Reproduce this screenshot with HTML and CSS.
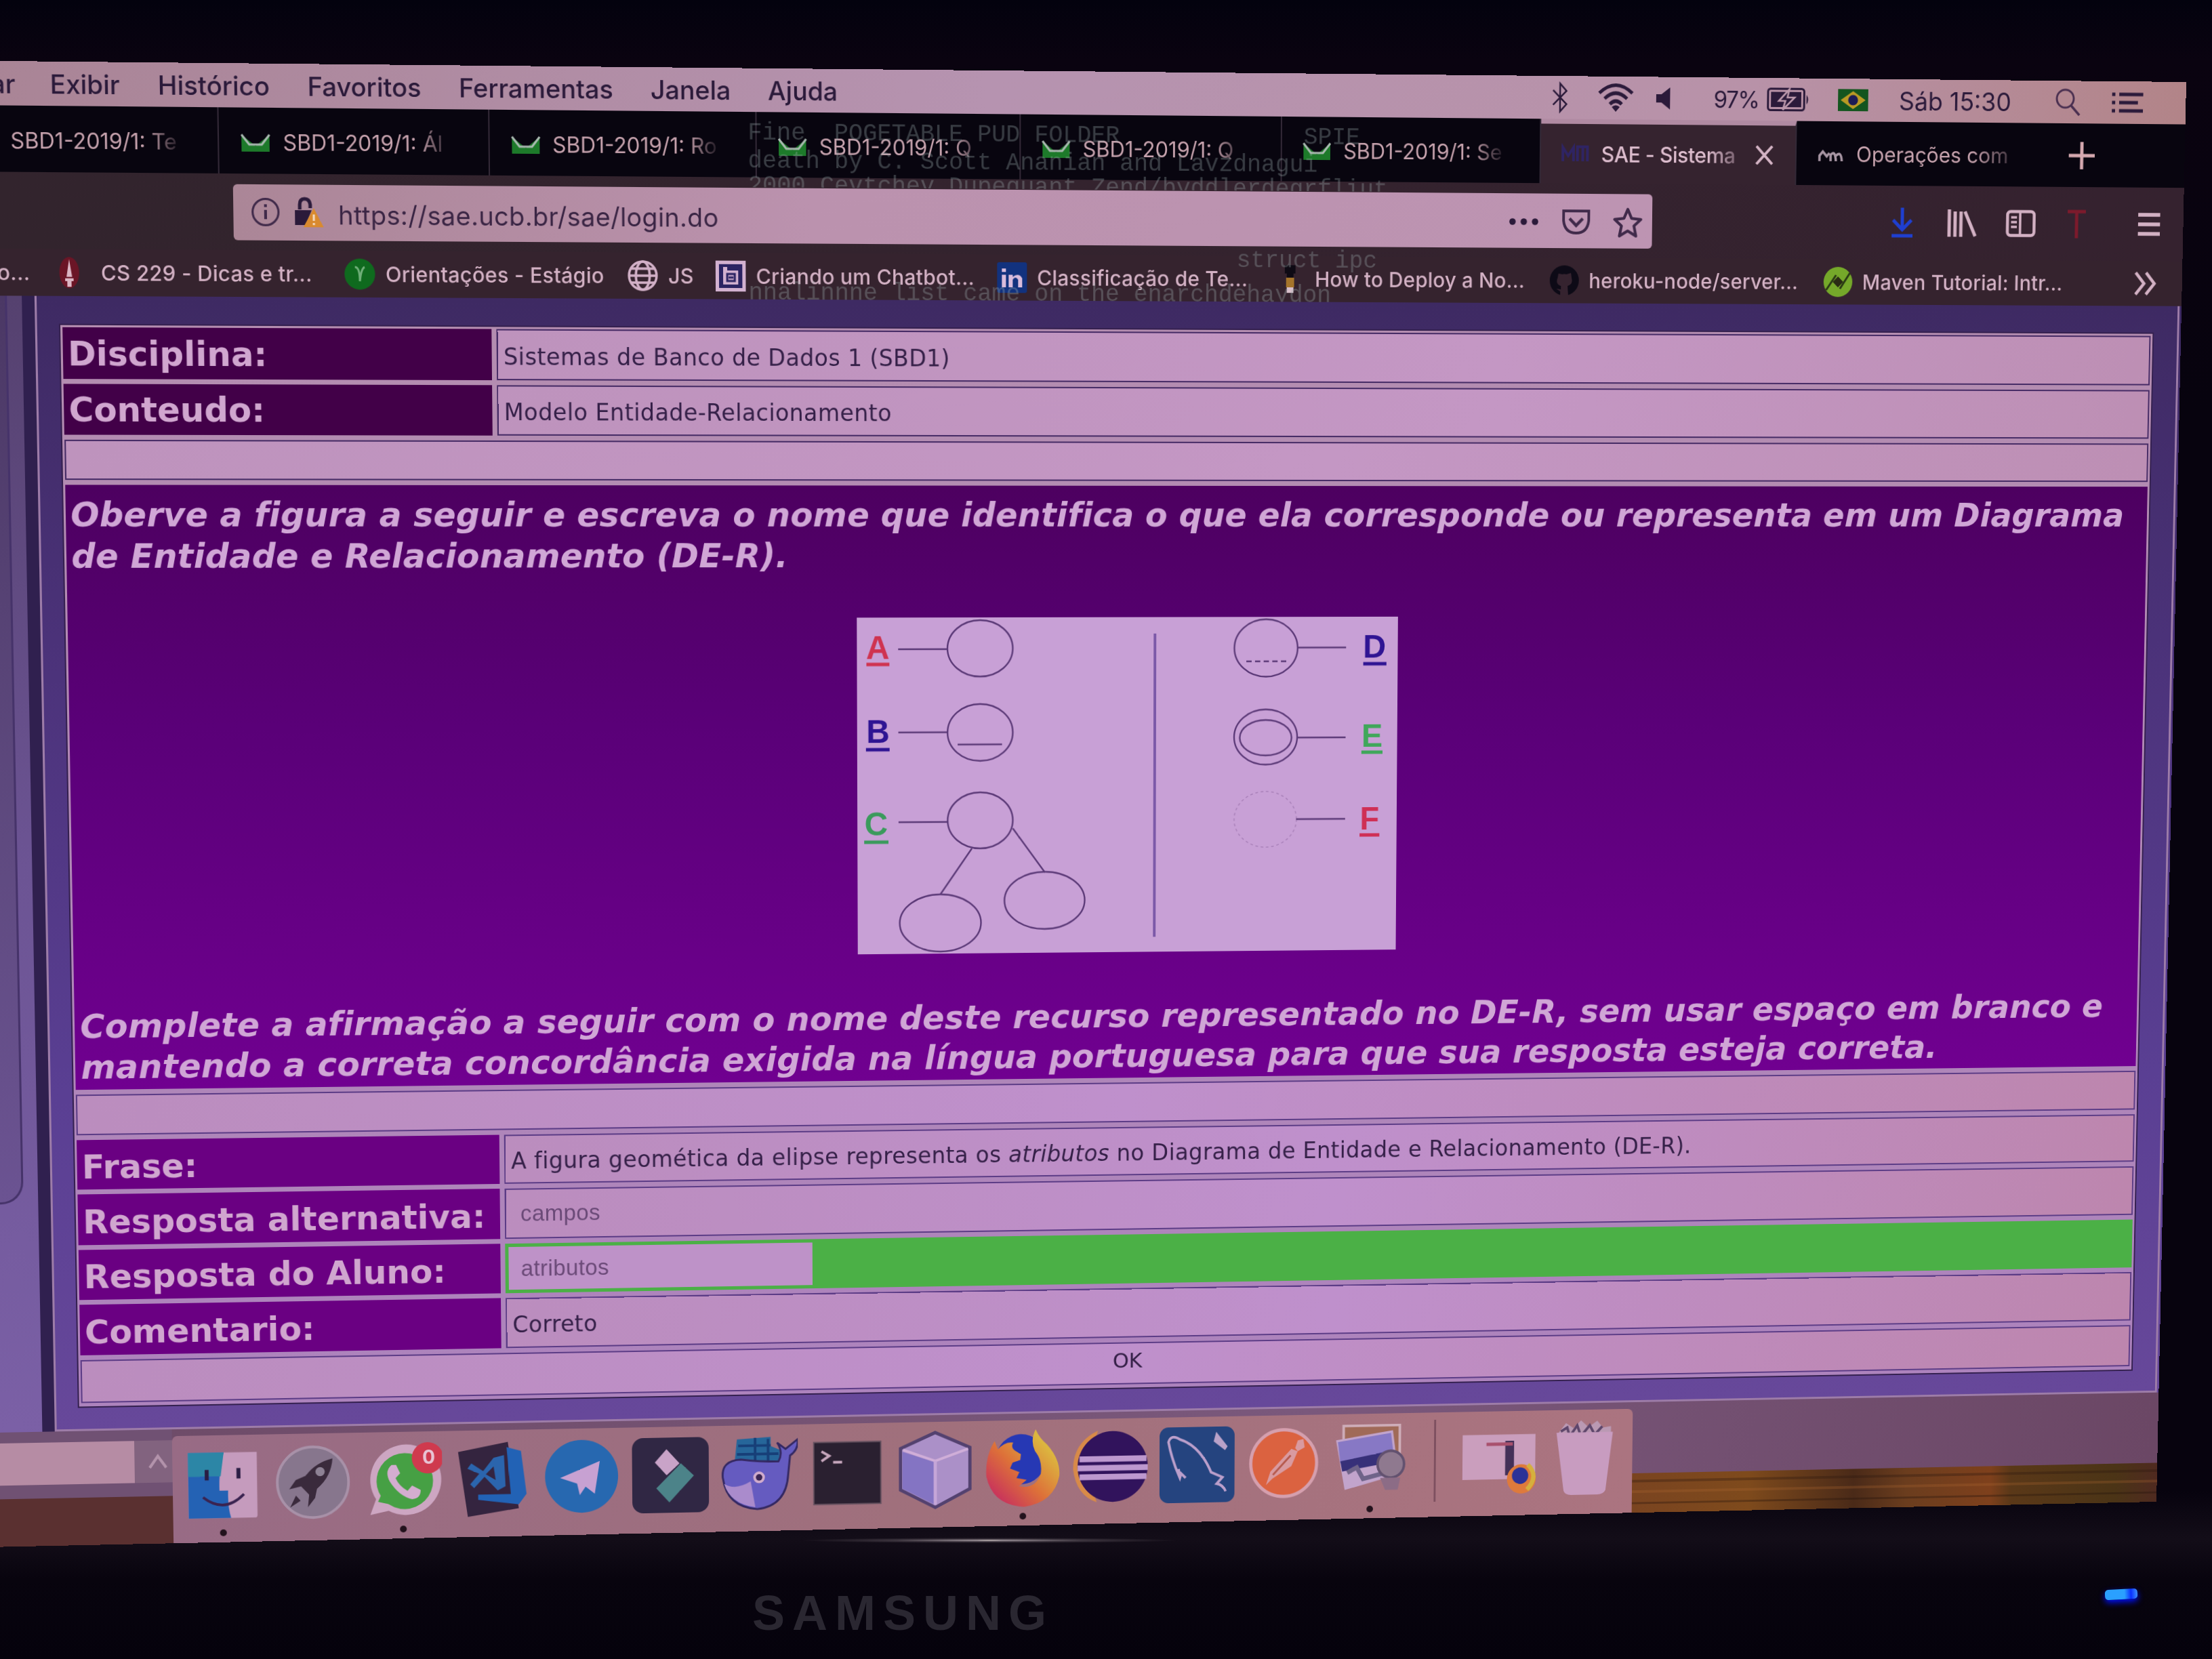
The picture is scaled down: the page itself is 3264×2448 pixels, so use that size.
FILE: index.html
```html
<!DOCTYPE html>
<html lang="pt-BR">
<head>
<meta charset="utf-8">
<title>SAE - Sistema</title>
<link rel="stylesheet" href="styles.css">
</head>
<body>
<div class="room">
<main class="screen">
  <header class="menubar">
    <nav class="menus"><span class="cut">ar</span><span>Exibir</span><span>Histórico</span><span>Favoritos</span><span>Ferramentas</span><span>Janela</span><span>Ajuda</span></nav>
    <div class="status">
      <svg class="s-bt" viewBox="0 0 30 48"><path d="M4 13 25 34 15 45V3L25 14 4 35" fill="none" stroke="#2b1a3a" stroke-width="2.6"/></svg>
      <svg class="s-wifi" viewBox="0 0 56 44"><g fill="none" stroke="#2b1a3a" stroke-width="5"><path d="M3 15Q28-8 53 15"/><path d="M11 23Q28 7 45 23"/><path d="M19 31Q28 22 37 31"/></g><path d="M22 35Q28 30 34 35L28 42Z" fill="#2b1a3a"/></svg>
      <svg class="s-vol" viewBox="0 0 24 34"><path d="M1 11H9L22 1V33L9 23H1Z" fill="#2b1a3a"/></svg>
      <span class="pct">97%</span>
      <svg class="s-bat" viewBox="0 0 66 34"><rect x="1.5" y="1.5" width="55" height="31" rx="4" fill="none" stroke="#2b1a3a" stroke-width="3"/><rect x="6" y="6" width="46" height="22" fill="#2b1a3a"/><path d="M60 10Q65 17 60 24Z" fill="#2b1a3a"/><path d="M34 2 18 19H28L24 32 42 14H31Z" fill="#2b1a3a" stroke="#bb98ab" stroke-width="2.6"/></svg>
      <svg class="s-flag" viewBox="0 0 46 32"><path d="M0 0H46V32H0Z" fill="#14551f"/><path d="M23 3 42 16 23 29 4 16Z" fill="#b99a24"/><circle cx="23" cy="16" r="7.5" fill="#1c1c55"/></svg>
      <span class="clock">Sáb 15:30</span>
      <svg class="s-find" viewBox="0 0 42 42"><circle cx="17" cy="16" r="13" fill="none" stroke="#4a2f50" stroke-width="3"/><path d="m26 26 13 14" stroke="#4a2f50" stroke-width="3.5"/></svg>
      <svg class="s-list" viewBox="0 0 50 32"><path d="M12 4H49M12 16H41M12 28H49" stroke="#2b1a3a" stroke-width="5"/><path d="M1 4H6M1 16H6M1 28H6" stroke="#2b1a3a" stroke-width="5"/></svg>
    </div>
  </header>

  <div class="tabs">
    <div class="tab"><i class="fav"></i><span>SBD1-2019/1: Te</span></div>
    <div class="tab"><svg class="fav" viewBox="0 0 44 30"><path d="M2 4 22 20 42 4V28H2Z" fill="#1d7a2a"/><path d="M2 4 13 18H31L42 4" fill="none" stroke="#a9b8b0" stroke-width="3"/></svg><span>SBD1-2019/1: Ál</span></div>
    <div class="tab"><svg class="fav" viewBox="0 0 44 30"><path d="M2 4 22 20 42 4V28H2Z" fill="#1d7a2a"/><path d="M2 4 13 18H31L42 4" fill="none" stroke="#a9b8b0" stroke-width="3"/></svg><span>SBD1-2019/1: Ro</span></div>
    <div class="tab"><svg class="fav" viewBox="0 0 44 30"><path d="M2 4 22 20 42 4V28H2Z" fill="#1d7a2a"/><path d="M2 4 13 18H31L42 4" fill="none" stroke="#a9b8b0" stroke-width="3"/></svg><span>SBD1-2019/1: Q</span></div>
    <div class="tab"><svg class="fav" viewBox="0 0 44 30"><path d="M2 4 22 20 42 4V28H2Z" fill="#1d7a2a"/><path d="M2 4 13 18H31L42 4" fill="none" stroke="#a9b8b0" stroke-width="3"/></svg><span>SBD1-2019/1: Q</span></div>
    <div class="tab"><svg class="fav" viewBox="0 0 44 30"><path d="M2 4 22 20 42 4V28H2Z" fill="#1d7a2a"/><path d="M2 4 13 18H31L42 4" fill="none" stroke="#a9b8b0" stroke-width="3"/></svg><span>SBD1-2019/1: Se</span></div>
    <div class="tab active"><svg class="fav" viewBox="0 0 44 30"><path d="M3 26V6L11 18 19 6V26M25 26V5H40V26M33 5V26" fill="none" stroke="#2f2463" stroke-width="4"/></svg><span class="wide">SAE - Sistema</span><svg class="close" viewBox="0 0 28 28"><path d="M2 1 26 27M26 1 2 27" stroke="#d3b3c4" stroke-width="4"/></svg></div>
    <div class="tab last"><svg class="fav" viewBox="0 0 44 30"><path d="M5 25V17L10 11 16 18 20 13M22 25V16Q29 8 30 25M30 17Q38 9 39 25" fill="none" stroke="#a896a4" stroke-width="3.6"/></svg><span class="wide">Operações com</span></div>
    <svg class="plus" viewBox="0 0 40 40"><path d="M20 0V40M0 20H40" stroke="#d6a9b0" stroke-width="5"/></svg>
  </div>

  <div class="toolbar">
    <div class="url">
      <svg class="u-info" viewBox="0 0 42 42"><circle cx="21" cy="21" r="18.5" fill="none" stroke="#402a4a" stroke-width="3"/><path d="M21 18V31M21 10V14" stroke="#402a4a" stroke-width="4"/></svg>
      <svg class="u-lock" viewBox="0 0 46 44"><path d="M10 18V11Q10 3 17 3T25 11V16" fill="none" stroke="#2b1a3a" stroke-width="5"/><path d="M3 19H27L18 40H3Z" fill="#2b1a3a"/><path d="M30 16 44 43H15Z" fill="#d98a2e"/><path d="M30 25V34M30 37V40" stroke="#f3d9c0" stroke-width="3"/></svg>
      <span class="addr">https://sae.ucb.br/sae/login.do</span>
      <svg class="u-dots" viewBox="0 0 44 10"><g fill="#2b1a3a"><circle cx="5" cy="5" r="4.8"/><circle cx="22" cy="5" r="4.8"/><circle cx="39" cy="5" r="4.8"/></g></svg>
      <svg class="u-pocket" viewBox="0 0 44 38"><path d="M3 3H41V17Q39 35 22 35T3 17Z" fill="none" stroke="#402a4a" stroke-width="4"/><path d="m12 14 10 10 10-10" fill="none" stroke="#402a4a" stroke-width="4.5"/></svg>
      <svg class="u-star" viewBox="0 0 44 44"><path d="m22 4 5.500 12.500 13.500 1.500-10 9 3 14-12-7-12 7 3-14-10-9 13.500-1.500Z" fill="none" stroke="#402a4a" stroke-width="4" stroke-linejoin="round"/></svg>
    </div>
    <div class="tools">
      <svg class="t-down" viewBox="0 0 36 44"><path d="M18 0V30M4 18 18 32 32 18M2 41H34" fill="none" stroke="#1f3fd0" stroke-width="5"/></svg>
      <svg class="t-lib" viewBox="0 0 46 40"><path d="M3 0V40M12 3V40M21 3V40M27 3 43 39" stroke="#d3b1c4" stroke-width="5"/></svg>
      <svg class="t-side" viewBox="0 0 46 40"><rect x="2.500" y="2.500" width="41" height="35" rx="5" fill="none" stroke="#d3b1c4" stroke-width="4.500"/><path d="M22 3V37M8 11H17M8 18H17M8 25H17" stroke="#d3b1c4" stroke-width="3.600"/></svg>
      <svg class="t-t" viewBox="0 0 30 42"><path d="M1 3H29M15 3V42" stroke="#7c1a2c" stroke-width="5"/></svg>
      <svg class="t-menu" viewBox="0 0 34 36"><path d="M0 4H34M0 18H34M0 32H34" stroke="#d3b1c4" stroke-width="5.500"/></svg>
    </div>
  </div>

  <div class="bookmarks">
    <div class="bm tail">o...</div>
    <div class="bm"><svg viewBox="0 0 44 44"><ellipse cx="14" cy="22" rx="14" ry="22" fill="#6b1526"/><path d="M14 3 18 28H10ZM8 30H20V34H17V42H11V34H8Z" fill="#dcb6c4"/></svg>CS 229 - Dicas e tr...</div>
    <div class="bm"><svg viewBox="0 0 44 44"><circle cx="22" cy="22" r="22" fill="#0f6a1e"/><path d="M15 12Q22 12 22 32Q24 14 29 12" fill="none" stroke="#6fae78" stroke-width="3"/></svg>Orientações - Estágio</div>
    <div class="bm"><svg viewBox="0 0 44 44"><g fill="none" stroke="#d3b1c8" stroke-width="3.500"><circle cx="22" cy="22" r="20"/><ellipse cx="22" cy="22" rx="10" ry="20"/><path d="M2 22H42M5 12H39M5 32H39"/></g></svg>JS</div>
    <div class="bm"><svg viewBox="0 0 44 44"><path d="M0 0H44V44H0Z" fill="#d3b1d0"/><path d="M5 5H39V39H5Z" fill="#2b2362"/><path d="M11 9H17V14H33V34H11Z" fill="#d3b1d0"/><path d="M17 19H28V29H17Z" fill="none" stroke="#2b2362" stroke-width="3"/><path d="M19 24H26" stroke="#2b2362" stroke-width="3"/></svg>Criando um Chatbot...</div>
    <div class="bm"><svg viewBox="0 0 44 44"><rect width="44" height="44" rx="3" fill="#12327e"/><path d="M7 18H13V36H7ZM7 9H13V14H7ZM17 18H23V21Q32 14 37 23V36H31V25Q27 19 23 25V36H17Z" fill="#d9bcdc"/></svg>Classificação de Te...</div>
    <div class="bm"><svg viewBox="0 0 44 44"><path d="M14 2H30V14H27V20H17V14H14Z" fill="#0e0a14"/><path d="M16 20H28V34H16Z" fill="#a5742b"/><path d="M17 34H27V42H17Z" fill="#d9c0cc"/></svg>How to Deploy a No...</div>
    <div class="bm"><svg viewBox="0 0 44 44"><circle cx="22" cy="22" r="22" fill="#0d0a16"/><path d="M13 12 19 13Q22 12 25 13L32 11 33 18Q36 27 27 30L28 44H16V38L10 34 17 35 17 30Q8 27 12 18Z" fill="#35232f"/></svg>heroku-node/server...</div>
    <div class="bm"><svg viewBox="0 0 44 44"><circle cx="22" cy="22" r="22" fill="#75a82a"/><path d="M22 14 30 22 22 30 14 22Z" fill="#2a2c14"/><path d="M4 34 19 12M25 32 40 9" stroke="#2a3a14" stroke-width="3"/></svg>Maven Tutorial: Intr...</div>
    <svg class="more" viewBox="0 0 36 36"><path d="m3 2 13 16L3 34M19 2l13 16-13 16" fill="none" stroke="#d3b1c4" stroke-width="4.500"/></svg>
  </div>

  <section class="page">
    <aside class="side"><div class="panel"></div></aside>
    <div class="frame">
      <div class="form">
        <div class="lab">Disciplina:</div><div class="val">Sistemas de Banco de Dados 1 (SBD1)</div>
        <div class="lab">Conteudo:</div><div class="val">Modelo Entidade-Relacionamento</div>
        <div class="val full"></div>
        <div class="question full">
          <p class="q1">Oberve a figura a seguir e escreva o nome que identifica o que ela corresponde ou representa em um Diagrama<br>de Entidade e Relacionamento (DE-R).</p>
          <svg class="diagram" viewBox="0 0 808 491">
            <rect width="808" height="491" fill="#c8a0d6"/>
            <g fill="none" stroke="#5c3a78" stroke-width="2.400">
              <ellipse cx="182.500" cy="45" rx="48.500" ry="41"/><path d="M61 46H134"/>
              <ellipse cx="182.500" cy="167.500" rx="48.500" ry="41.500"/><path d="M61 167H134M149 185H215"/>
              <ellipse cx="182.500" cy="296" rx="48.500" ry="41"/><path d="M61 298H134M170 337 123 404M231 308 279 373"/>
              <ellipse cx="123" cy="446" rx="60.500" ry="42"/><ellipse cx="278.500" cy="414" rx="60" ry="42"/>
              <ellipse cx="609.500" cy="45.500" rx="47.500" ry="42"/><path d="M657 45H730"/><path d="M580 65H643" stroke-dasharray="8 5"/>
              <ellipse cx="609.500" cy="176" rx="47.500" ry="40.500"/><ellipse cx="609.500" cy="177" rx="39" ry="26"/><path d="M657 177H730"/>
              <ellipse cx="609.500" cy="297" rx="47" ry="41" stroke="#aa82ba" stroke-width="1.600" stroke-dasharray="4 4"/><path d="M656 297H730"/>
            </g>
            <path d="M443 24V469" stroke="#7c59a8" stroke-width="4"/>
            <g class="letters" text-anchor="middle">
              <text x="31" y="60" fill="#cf3350">A</text><text x="31" y="182" fill="#2f1493">B</text><text x="28" y="317" fill="#3a9a5c">C</text>
              <text x="773" y="60" fill="#2f1493">D</text><text x="770" y="191" fill="#3fa75a">E</text><text x="767" y="313" fill="#cf2f55">F</text>
            </g>
            <g stroke-width="5"><path d="M14 68H48" stroke="#cf3350"/><path d="M13 192H48" stroke="#2f1493"/><path d="M10 327H46" stroke="#3a9a5c"/><path d="M756 69H791" stroke="#2f1493"/><path d="M754 199H786" stroke="#3fa75a"/><path d="M752 321H782" stroke="#cf2f55"/></g>
          </svg>
          <p class="q2">Complete a afirmação a seguir com o nome deste recurso representado no DE-R, sem usar espaço em branco e<br>mantendo a correta concordância exigida na língua portuguesa para que sua resposta esteja correta.</p>
        </div>
        <div class="val full"></div>
        <div class="lab">Frase:</div><div class="val">A figura geomética da elipse representa os&nbsp;<em>atributos</em>&nbsp;no Diagrama de Entidade e Relacionamento (DE-R).</div>
        <div class="lab">Resposta alternativa:</div><div class="val field">campos</div>
        <div class="lab">Resposta do Aluno:</div><div class="val right"><div class="answer">atributos</div></div>
        <div class="lab">Comentario:</div><div class="val">Correto</div>
        <div class="val full ok">OK</div>
      </div>
    </div>
  </section>

  <footer class="desk">
    <div class="strip"><div class="box"><svg viewBox="0 0 30 24"><path d="M3 21 15 4 27 21" fill="none" stroke="#b393ab" stroke-width="4"/></svg></div></div>
    <div class="dock">
      <div class="app run"><svg viewBox="0 0 120 120"><path d="M8 12H112V108Q112 112 108 112H8Z" fill="#c59bbd"/><path d="M8 12H62Q54 40 55 70H68Q67 95 72 112H8Z" fill="#2462b4"/><path d="M8 12H62L57 48H8Z" fill="#2c86a6"/><path d="M36 38V54M84 36V52" stroke="#2a1d44" stroke-width="6"/><path d="M30 80Q62 106 92 76" fill="none" stroke="#3a2350" stroke-width="4"/></svg></div>
      <div class="app"><svg viewBox="0 0 120 120"><circle cx="60" cy="60" r="54" fill="#87768d" stroke="#a891a8" stroke-width="4"/><path d="M90 24Q64 30 49 50L34 56 24 70 42 66 54 79 52 98 63 84 66 70Q88 52 90 24ZM34 80 25 98 41 88Z" fill="#3a2a3c"/><circle cx="71" cy="44" r="7" fill="#8e8295"/></svg></div>
      <div class="app run"><svg viewBox="0 0 120 120"><path d="M10 112 19 88A54 54 0 1 1 38 106Z" fill="#cda6c2"/><circle cx="63" cy="61" r="43" fill="#46a044"/><path d="M22 92 30 74 48 98Z" fill="#46a044"/><path d="M43 36Q32 45 40 61 54 84 74 89 87 88 87 75L74 68 67 76Q54 68 49 56L56 49 50 36Z" fill="#d4add0"/><circle cx="98" cy="26" r="24" fill="#cf3a4e"/></svg><b class="badge">0</b></div>
      <div class="app"><svg viewBox="0 0 120 120"><path d="M8 18 84 4 100 106 22 118Z" fill="#34243f"/><path d="M82 12 104 18 112 84 100 100 38 92V84L88 84Z" fill="#2262b5"/><path d="M62 28 78 24 80 72 68 78 48 57 32 74 26 68 40 52 22 44 28 36 46 48Z" fill="#2b65ad"/><path d="M62 41 50 53 65 62Z" fill="#34243f"/></svg></div>
      <div class="app"><svg viewBox="0 0 120 120"><circle cx="60" cy="59" r="56" fill="#2768b0"/><path d="M27 61 88 36 80 86 66 75 57 88 53 70Z" fill="#c7a1d2"/></svg></div>
      <div class="app"><svg viewBox="0 0 120 120"><rect x="1" y="2" width="118" height="116" rx="17" fill="#302744"/><path d="M54 20 74 42 54 60 36 40Z" fill="#c9a3c8"/><path d="M76 42 96 61 58 102 38 80Z" fill="#4c8389"/></svg></div>
      <div class="app"><svg viewBox="0 0 120 120"><path d="M26 7 78 4V18L92 24V46H22Z" fill="#26669a"/><path d="M54 5V44M74 7V44M28 17H78M26 30H90" stroke="#173f78" stroke-width="4"/><path d="M90 42Q98 28 88 13L101 23 120 8Q121 25 108 33L105 62Q102 111 57 115 10 111 4 66 1 39 32 38 60 42 90 42Z" fill="#655bc0" stroke="#342862" stroke-width="3"/><path d="M6 75Q23 86 47 72L54 112Q15 106 6 75Z" fill="#aa8bcc"/><circle cx="60" cy="66" r="9" fill="#d1accc"/><circle cx="60" cy="66" r="5" fill="#3a2552"/></svg></div>
      <div class="app"><svg viewBox="0 0 120 120"><path d="M8 14H112V110H8Z" fill="#2a2030" stroke="#675260" stroke-width="2"/><path d="m20 28 12 7-12 8M38 45H52" fill="none" stroke="#c6a6bc" stroke-width="4"/></svg></div>
      <div class="app"><svg viewBox="0 0 120 120"><path d="M60 2 114 26V90L60 118 6 90V26Z" fill="#ab90c8" stroke="#53416f" stroke-width="5"/><path d="M9 31 60 48V114L9 88Z" fill="#8474c3"/><path d="M10 28 60 46 111 28" fill="none" stroke="#d0aed8" stroke-width="4"/><path d="M60 46V114" stroke="#c5a6d8" stroke-width="5"/></svg></div>
      <div class="app run"><svg viewBox="0 0 120 120"><defs><linearGradient id="fox" x1="1" y1="0" x2="0" y2="1"><stop offset=".2" stop-color="#dcb63f"/><stop offset=".55" stop-color="#dd7039"/><stop offset=".9" stop-color="#c62c60"/></linearGradient></defs><circle cx="57" cy="46" r="39" fill="#2638b4"/><path d="M80 0Q86 14 98 24 119 48 117 73 109 114 62 120 13 117 3 72 1 40 16 17L21 30Q32 18 45 20 40 28 50 34L57 38 56 47 44 51 40 60 55 66 50 75 66 78 54 88Q80 93 88 69 91 49 79 34 71 17 80 0Z" fill="url(#fox)"/></svg></div>
      <div class="app"><svg viewBox="0 0 120 120"><path d="M41 4Q2 22 2 63 7 104 39 115Q19 62 41 4Z" fill="#d88a48"/><circle cx="64" cy="60" r="55" fill="#31135c"/><path d="M12 48H117M9 62H119M12 76H117" stroke="#bd98cf" stroke-width="9"/></svg></div>
      <div class="app"><svg viewBox="0 0 120 120"><rect x="1" y="1" width="118" height="118" rx="14" fill="#25447f"/><path d="M42 80 35 73 33 80Q20 51 15 24 19 11 33 20 65 31 82 72L100 80 91 90Q101 92 105 102M33 80 31 66" fill="none" stroke="#bb9fcb" stroke-width="4"/><path d="M86 24 90 9 108 32 104 38Z" fill="#b9a2c9"/></svg></div>
      <div class="app"><svg viewBox="0 0 120 120"><circle cx="60" cy="60" r="52" fill="#db6240" stroke="#d59fae" stroke-width="5"/><path d="M32 94 39 73 72 38 82 42 72 65 42 84ZM78 37 82 25 91 23 93 36 82 42Z" fill="#d99aa0"/><path d="m43 78 28-30" stroke="#b65a4e" stroke-width="3"/></svg></div>
      <div class="app run"><svg viewBox="0 0 120 120"><path d="M18 4H107V70H18Z" fill="#a06a58" stroke="#ceadb9" stroke-width="4"/><path d="M6 26 96 12 105 81 20 104Z" fill="#c2a4cc"/><path d="M9 29 93 16 97 46 13 62Z" fill="#8778c5"/><path d="M13 59 97 43 99 61 16 75Z" fill="#373079"/><path d="m24 77 15-8 10 18 32-8" fill="none" stroke="#6f6389" stroke-width="7"/><circle cx="93" cy="65" r="21" fill="#8f798f" stroke="#62516f" stroke-width="4"/><path d="M76 86H108L104 105H84Z" fill="#8c6c86"/></svg></div>
      <div class="rule"></div>
      <div class="app"><svg viewBox="0 0 120 120"><path d="M2 22H118V92H2Z" fill="#ca9ebd"/><path d="M70 32H84V86H70Z" fill="#443058"/><path d="M40 37H82" stroke="#a8506d" stroke-width="5"/><circle cx="96" cy="92" r="23" fill="#de7a3c"/><circle cx="94" cy="87" r="13" fill="#2c3297"/><path d="M106 70Q125 88 105 109" fill="none" stroke="#d5b03d" stroke-width="7"/></svg></div>
      <div class="app"><svg viewBox="0 0 120 120"><path d="M16 24 30 6 42 14 54 2 66 13 80 3 89 14 102 12V27Z" fill="#ba99b3"/><path d="M22 19 32 13 36 27 48 10 54 27 68 10 76 25 88 12" fill="none" stroke="#5e466b" stroke-width="4"/><path d="M15 21H105L94 112Q91 119 81 119H39Q29 119 27 112Z" fill="#c89cc0"/></svg></div>
    </div>
    <div class="wood"></div>
  </footer>

  <div class="ghost g1">Fine  POGETABLE PUD FOLDER             SPIE</div>
  <div class="ghost g2">death by C. Scott Ananian and Lavzdnagui</div>
  <div class="ghost g3">2000 Cevtchev Dupequant Zend/byddlerdegrfliut</div>
  <div class="ghost g4">struct ipc</div>
  <div class="ghost g5">nnalinnne list came on the enarchdehaydon</div>
</main>
<div class="glint"></div>
<div class="brand">SAMSUNG</div>
<div class="led"></div>
</div>
</body>
</html>
```
FILE: styles.css
```css
* { box-sizing: border-box; }
html, body { margin: 0; }
body { background: #07030e; }
svg { display: block; flex: none; }
p { margin: 0; }

.room {
  position: relative;
  width: 3264px;
  height: 2448px;
  overflow: hidden;
  background: linear-gradient(#03020e 0, #0a0310 90px, #07030e 600px, #07030e 2200px, #130d18 2270px, #08040e 2330px, #05020c 2448px);
  font-family: Inter, "Liberation Sans", sans-serif;
}

/* The monitor stands at a slight angle */
.screen {
  position: relative;
  display: flex;
  flex-direction: column;
  width: 3286px;
  height: 2130px;
  overflow: hidden;
  background: #35232f;
  transform-origin: 0 0;
  transform: matrix3d(1.04707, 0.011382, 0, 0.0000145907, 0.0194855, 1.059371, 0, 0.0000129268, 0, 0, 1, 0, -60, 89.4, 0, 1);
}

/* menu bar */
.menubar {
  display: flex;
  justify-content: space-between;
  align-items: center;
  height: 62px;
  padding: 0 65px 0 43px;
  background: linear-gradient(90deg, #a98495, #b693b0 45%, #b892a8 80%, #b28488);
  color: #2b1a3a;
  font-size: 37px;
  font-weight: 500;
}
.menus { display: flex; gap: 54px; white-space: nowrap; }
.menus .cut { margin-right: -5px; }
.status { display: flex; align-items: center; white-space: nowrap; }
.s-bt { width: 30px; height: 46px; }
.s-wifi { width: 56px; height: 44px; margin-left: 41px; }
.s-vol { width: 24px; height: 34px; margin-left: 32px; }
.pct { margin-left: 64px; width: 73px; font-size: 34px; font-weight: 400; letter-spacing: -1.500px; }
.s-bat { width: 66px; height: 34px; margin-left: 8px; }
.s-flag { width: 46px; height: 32px; margin-left: 42px; }
.clock { margin-left: 47px; width: 183px; font-weight: 400; }
.s-find { width: 42px; height: 42px; margin-left: 55px; }
.s-list { width: 50px; height: 32px; margin-left: 46px; }

/* tabs */
.tabs {
  display: flex;
  align-items: stretch;
  height: 93px;
  padding-right: 139px;
  margin-left: -21px;
  background: #08050f;
}
.tab {
  display: flex;
  align-items: center;
  width: 387.300px;
  flex: none;
  padding: 4px 0 0 30px;
  border-right: 2px solid #332937;
  color: #c6a2ad;
  font-size: 31px;
}
.fav { width: 44px; height: 30px; margin-right: 17px; flex: none; }
.tab span {
  width: 245px;
  overflow: hidden;
  white-space: nowrap;
  -webkit-mask-image: linear-gradient(90deg, #000 80%, transparent);
  mask-image: linear-gradient(90deg, #000 80%, transparent);
}
.tab .wide { width: 215px; letter-spacing: -.5px; -webkit-mask-image: linear-gradient(90deg, #000 75%, #0004); mask-image: linear-gradient(90deg, #000 75%, #0004); }
.tab.active { padding-top: 0; background: #35232f; border-top: 7px solid #b08aa2; color: #dcbccd; font-weight: 500; }
.tab.last { padding-top: 2px; border-right: 0; }
.tab.last .wide { width: 240px; letter-spacing: 0; }
.close { width: 28px; height: 28px; margin-left: 18px; }
.plus { width: 40px; height: 40px; margin-left: 30px; align-self: center; }

/* toolbar */
.toolbar {
  display: flex;
  align-items: center;
  height: 108px;
  padding: 0 36px 0 385px;
  background: linear-gradient(90deg, #32242d, #35222f);
}
.url {
  display: flex;
  align-items: center;
  width: 2087px;
  height: 79px;
  padding: 0 14px 0 25px;
  border-radius: 6px;
  background: linear-gradient(90deg, #ab8697, #bb92ae 40%, #bd94b2);
}
.u-info { width: 42px; height: 42px; }
.u-lock { width: 46px; height: 44px; margin-left: 18px; }
.addr { margin: 7px auto 0 19px; color: #3a2544; font-size: 37px; letter-spacing: .4px; }
.u-dots { width: 44px; height: 10px; margin-top: 3px; }
.u-pocket { width: 44px; height: 38px; margin-left: 35px; margin-top: 3px; }
.u-star { width: 46px; height: 46px; margin-left: 33px; margin-top: 3px; }
.tools { display: flex; align-items: center; margin-left: auto; }
.t-down { width: 36px; height: 44px; }
.t-lib { width: 46px; height: 40px; margin-left: 51px; }
.t-side { width: 46px; height: 40px; margin-left: 44px; }
.t-t { width: 30px; height: 42px; margin-left: 48px; }
.t-menu { width: 34px; height: 36px; margin-left: 80px; }

/* bookmarks */
.bookmarks {
  display: grid;
  grid-template-columns: 84px 407px 409px 128px 413px 413px 412px 416px 481px 36px;
  align-items: center;
  height: 66px;
  padding: 0 0 0 48px;
  background: #35232e;
  color: #d3b1c4;
  font-size: 30px;
  font-weight: 500;
}
.bm { display: flex; align-items: center; gap: 15px; white-space: nowrap; letter-spacing: .25px; }
.bm svg { width: 44px; height: 44px; margin-left: 4px; }
.more { width: 36px; height: 36px; }

/* page */
.page {
  display: grid;
  grid-template-columns: 100px 1fr;
  height: 1633px;
  background: linear-gradient(#3e2a63, #4b3279 30%, #5a3f93 70%, #67489a);
}
.side {
  background: linear-gradient(#55416f, #6c5494 50%, #7b60a6);
  border-right: 18px solid #30204f;
}
.panel {
  width: 61px;
  height: 1300px;
  border: solid #46336a;
  border-width: 0 3px 3px 0;
  border-radius: 0 0 32px 0;
  background: linear-gradient(#4b3865, #5f4a80 60%, #6b5392);
}
.frame {
  margin-right: 3px;
  padding: 39px 36px 31px 31px;
  border: solid #9d7ca8;
  border-width: 0 3px 4px 3px;
}
.form {
  display: grid;
  grid-template-columns: 615px 1fr;
  grid-template-rows: 73px 72px 57px 868px 59px 72px 74px 73px 74px 63px;
  gap: 7px;
  padding: 3px 3px 5px 3px;
  height: 1560px;
  border: 2px solid #34204f;
  background: linear-gradient(#b48db0, #ad83bd);
  font-family: "DejaVu Sans", Verdana, sans-serif;
}
.full { grid-column: 1 / -1; }
.lab {
  display: flex;
  align-items: center;
  padding: 5px 0 0 7px;
  background: #6a0082;
  color: #d0a6cf;
  font-size: 48.300px;
  font-weight: bold;
  white-space: nowrap;
}
.lab:nth-child(-n+3) { padding-top: 0; background: #420048; }
.val {
  display: flex;
  align-items: center;
  padding: 5px 0 0 8px;
  border: 2px solid #472c66;
  background: linear-gradient(90deg, #be93bd, #c497c4 60%, #bd8fb4);
  color: #352048;
  font-size: 33px;
  letter-spacing: .4px;
  white-space: nowrap;
}
.question ~ .val { background: linear-gradient(90deg, #bb8dbe, #bf90cc 50%, #bd86ae); border-color: #5c3c86; }
.form > .val.right { padding: 5px; border: 0; background: #4bb046; }
.answer {
  display: flex;
  align-items: center;
  width: 450px;
  height: 100%;
  padding-left: 18px;
  background: #be92c8;
  color: #6b4a78;
  font: 33px "Liberation Sans", sans-serif;
}
.val.field { padding: 0 0 0 21px; color: #6b4a78; font: 33px "Liberation Sans", sans-serif; }
.val.ok { justify-content: center; padding: 0 0 10px; font-size: 31px; letter-spacing: 0; }
.question {
  padding: 13px 0 0 7px;
  background: linear-gradient(#4d0060, #5a0078 40%, #700090);
  color: #d0a6d6;
  font-size: 48.200px;
  letter-spacing: .08px;
  font-weight: bold;
  font-style: italic;
  line-height: 59px;
  white-space: nowrap;
}
.q2 { letter-spacing: .14px; padding-left: 1px; }
.diagram { width: 810px; height: 491px; margin: 60px 0 65px 1138px; }
.letters { font: bold 48px "Liberation Sans", sans-serif; }

/* bottom of the desktop */
.desk {
  display: flex;
  align-items: flex-end;
  height: 168px;
  background: linear-gradient(90deg, #6d4a66, #7a587c 60%, #6b4765);
}
.strip { width: 270px; height: 168px; padding-top: 16px; background: linear-gradient(#705173 0, #705173 98px, #5a3030 98px); }
.box { display: flex; justify-content: flex-end; align-items: center; width: 270px; height: 62px; padding-right: 6px; background: linear-gradient(90deg, #b68ca4 0, #b68ca4 215px, #82637f 215px); }
.box svg { width: 30px; height: 24px; }
.dock {
  display: flex;
  width: 2193px;
  height: 158px;
  padding: 11px 0 0 7px;
  border-radius: 8px 8px 0 0;
  background: linear-gradient(90deg, #986b85, #a0707c 50%, #ab7480);
}
.app { position: relative; width: 132px; flex: none; }
.app svg { width: 116px; height: 122px; margin: 0 auto; }
.run::after {
  content: "";
  display: block;
  width: 10px;
  height: 10px;
  margin: 6px auto 0;
  border-radius: 50%;
  background: #22121c;
}
.badge { position: absolute; left: 95px; top: 10px; color: #e8c4d4; font-size: 28px; }
.rule { width: 66px; height: 124px; background: linear-gradient(90deg, transparent 32px, #7e5060 32px, #7e5060 35px, transparent 35px); }
.wood {
  flex: 1;
  height: 60px;
  background:
    linear-gradient(#0000 0 10px, #2a160e55 10px 14px, #0000 14px 26px, #b0683044 26px 30px, #0000 30px 44px, #20100a55 44px 47px, #0000 47px),
    linear-gradient(90deg, #7a4420, #7e4a1c 22%, #4a2a18 42%, #6b3d1e 52%, #7e401c 68%, #5a3818 72%, #4b3416 92%, #4f2a20);
}

/* terminal window faintly visible through the browser chrome */
.ghost {
  position: absolute;
  color: #9fb0b0;
  opacity: .32;
  font: 35px "Liberation Mono", monospace;
  white-space: pre;
  line-height: 36px;
}
.g1 { left: 1128px; top: 74px; }
.g2 { left: 1128px; top: 114px; }
.g3 { left: 1128px; top: 149px; height: 20px; overflow: hidden; }
.g4 { left: 1848px; top: 252px; }
.g5 { left: 1128px; top: 302px; height: 27px; overflow: hidden; }

/* monitor body */
.glint {
  position: absolute;
  left: 1180px;
  top: 2269px;
  width: 560px;
  height: 8px;
  background: radial-gradient(closest-side, #fff6e0 0 6%, #8a8088 14%, #3c343e 50%, transparent);
}
.brand {
  position: absolute;
  left: 1110px;
  top: 2340px;
  color: #2a2731;
  font: bold 72px/80px "Liberation Sans", sans-serif;
  letter-spacing: 11px;
}
.led {
  position: absolute;
  left: 3106px;
  top: 2345px;
  width: 48px;
  height: 15px;
  border-radius: 5px;
  background: linear-gradient(90deg, #2aa0ff 60%, #0a30ff 80%, #3c90ff);
  box-shadow: 0 4px 10px #0010ff;
  transform: rotate(-3deg);
}
```
